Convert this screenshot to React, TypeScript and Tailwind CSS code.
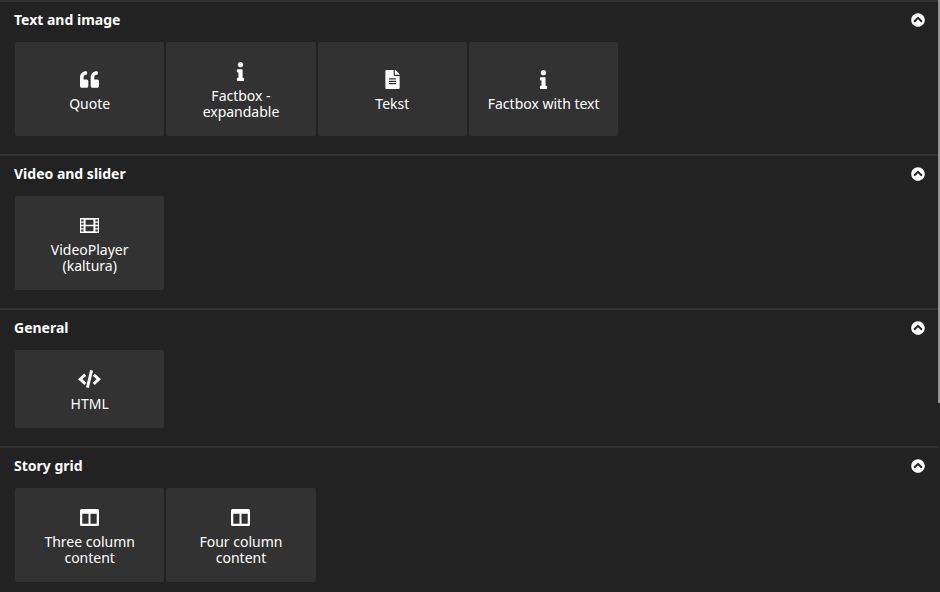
import { useState, type ReactNode } from 'react';
import { FaChevronCircleUp, FaFileAlt, FaInfo, FaQuoteLeft } from 'react-icons/fa';

type Tile = { label: string; icon: ReactNode };
type Group = { title: string; tiles: Tile[] };

function FilmIcon() {
  return (
    <svg width="19" height="15" viewBox="0 0 19 15" fill="currentColor" aria-hidden="true">
      <path
        fillRule="evenodd"
        d="M0 0h19v15H0zM1.2 1.5v2h2.4v-2zM1.2 4.8v2h2.4v-2zM1.2 8.2v2h2.4v-2zM1.2 11.5v2h2.4v-2zM15.4 1.5v2h2.4v-2zM15.4 4.8v2h2.4v-2zM15.4 8.2v2h2.4v-2zM15.4 11.5v2h2.4v-2zM5.6 1.8v4.9h7.8V1.8zM5.6 8.3v4.9h7.8V8.3z"
      />
    </svg>
  );
}

function CodeIcon() {
  return (
    <svg
      width="23"
      height="18"
      viewBox="0 0 23 18"
      fill="none"
      stroke="currentColor"
      strokeWidth="2.9"
      aria-hidden="true"
    >
      <path d="M7.3 4.6L2.2 9.2l5.1 4.6M15.7 4.6L20.8 9.2l-5.1 4.6M13.6.3L9.4 17.7" />
    </svg>
  );
}

function ColumnsIcon() {
  return (
    <svg width="19" height="17" viewBox="0 0 19 17" fill="currentColor" aria-hidden="true">
      <path
        fillRule="evenodd"
        d="M1.5 0h16A1.5 1.5 0 0 1 19 1.5v14a1.5 1.5 0 0 1-1.5 1.5h-16A1.5 1.5 0 0 1 0 15.5v-14A1.5 1.5 0 0 1 1.5 0zM2.3 4.7v10h6.2v-10zM10.5 4.7v10h6.2v-10z"
      />
    </svg>
  );
}

const groups: Group[] = [
  {
    title: 'Text and image',
    tiles: [
      { label: 'Quote', icon: <FaQuoteLeft size={19} /> },
      { label: 'Factbox - expandable', icon: <FaInfo size={19} /> },
      { label: 'Tekst', icon: <FaFileAlt size={19} /> },
      { label: 'Factbox with text', icon: <FaInfo size={19} /> },
    ],
  },
  {
    title: 'Video and slider',
    tiles: [{ label: 'VideoPlayer (kaltura)', icon: <FilmIcon /> }],
  },
  {
    title: 'General',
    tiles: [{ label: 'HTML', icon: <CodeIcon /> }],
  },
  {
    title: 'Story grid',
    tiles: [
      { label: 'Three column content', icon: <ColumnsIcon /> },
      { label: 'Four column content', icon: <ColumnsIcon /> },
    ],
  },
];

function Section({ title, tiles }: Group) {
  const [open, setOpen] = useState(true);
  return (
    <section className="border-t-2 border-[#323232] pb-[18px]">
      <header className="flex items-center justify-between pt-2 pr-[13px] pb-3 pl-[14px]">
        <h2 className="text-sm leading-5 font-bold">{title}</h2>
        <button
          type="button"
          aria-expanded={open}
          aria-label={`Toggle ${title}`}
          onClick={() => setOpen(!open)}
        >
          <FaChevronCircleUp size={14} className={open ? '' : 'rotate-180'} />
        </button>
      </header>
      {open && (
        <div className="grid grid-cols-6 gap-[2px] pr-[17px] pl-[15px]">
          {tiles.map((tile) => (
            <button
              key={tile.label}
              type="button"
              className="flex flex-col items-center justify-center rounded-xs bg-[#323232] p-4"
            >
              <span className="mb-1 flex h-[26px] items-center">{tile.icon}</span>
              <span className="text-sm leading-4">{tile.label}</span>
            </button>
          ))}
        </div>
      )}
    </section>
  );
}

export default function App() {
  return (
    <div className="flex h-screen overflow-hidden bg-[#222222] font-['Noto_Sans',sans-serif] text-white">
      <main className="min-w-0 flex-1">
        {groups.map((group) => (
          <Section key={group.title} {...group} />
        ))}
      </main>
      <div className="w-[2px]" aria-hidden="true">
        <div className="h-[68%] bg-[#949494]" />
      </div>
    </div>
  );
}
